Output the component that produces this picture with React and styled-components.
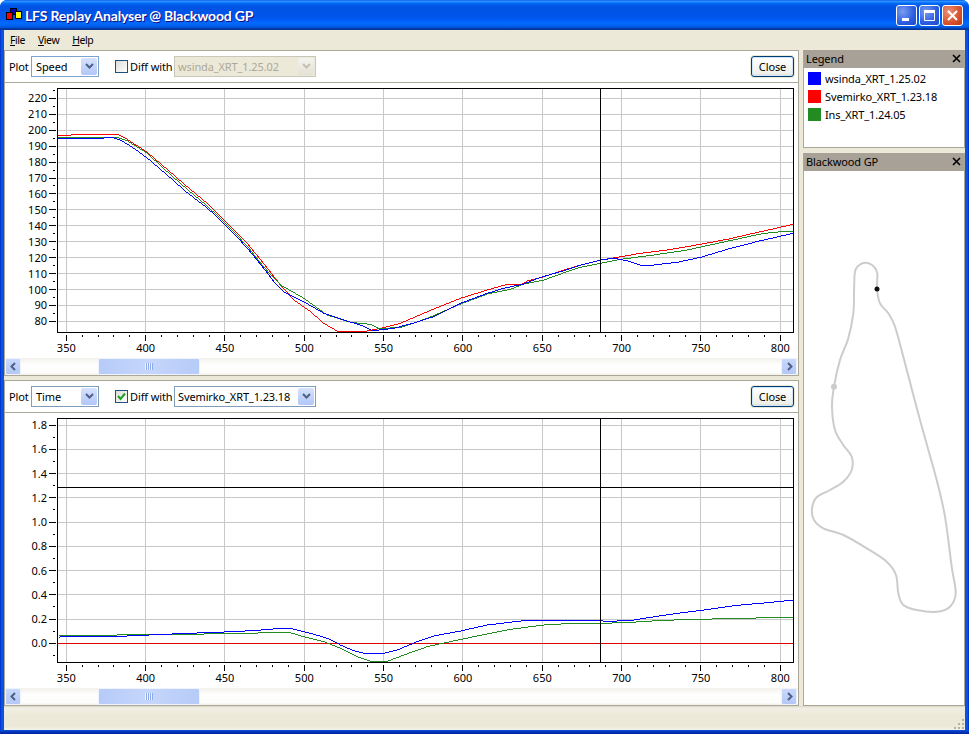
import React from 'react';
import styled, { createGlobalStyle } from 'styled-components';

const UI_FONT = '"Noto Sans", "DejaVu Sans", sans-serif';

const GlobalStyle = createGlobalStyle`
html, body {
  margin: 0;
  padding: 0;
  background: #fff;
}
body {
  font-family: ${UI_FONT};
  font-size: 11px;
  letter-spacing: -0.12px;
  color: #000;
}
`;

// ---- window chrome ----
const Window = styled.div`
width: 969px;
height: 734px;
display: flex;
flex-direction: column;
overflow: hidden;
border-radius: 7px 7px 0 0;
background: #0855dd;
`;
const TitleBar = styled.div`
height: 30px;
flex: none;
display: flex;
align-items: center;
padding: 0 6px;
background: linear-gradient(180deg, #0058ee 0%, #3593ff 4%, #288eff 6%, #127dff 8%, #036ffc 10%, #0262ee 14%, #0057e5 20%, #0054e3 24%, #0055eb 56%, #005bf5 66%, #026afe 76%, #0062ef 86%, #0052d6 92%, #0040ab 94%, #003092 100%);
`;
const TitleText = styled.div`
flex: 1;
margin-left: 3px;
color: #fff;
font-family: Lato, "Open Sans", sans-serif;
font-size: 14px;
font-weight: 700;
letter-spacing: -0.18px;
white-space: nowrap;
text-shadow: 1px 1px 0 #0f1089;
`;
const CaptionButtons = styled.div`
display: flex;
gap: 2px;
`;
const CaptionButton = styled.div`
width: 21px;
height: 21px;
box-sizing: border-box;
border: 1px solid #fff;
border-radius: 3px;
display: flex;
align-items: center;
justify-content: center;
background: ${(p) => (p.$close
    ? 'radial-gradient(circle at 30% 30%, #e8937a, #d8512c 60%, #b83a12)'
    : 'radial-gradient(circle at 30% 30%, #7a9df0, #2b5de0 60%, #1f48c4)')};
`;
const Frame = styled.div`
flex: 1;
min-height: 0;
display: flex;
flex-direction: column;
padding: 0 4px;
background: linear-gradient(90deg, #0019cf 0, #0855dd 1px, #0855dd 968px, #0019cf 969px);
`;
const BottomEdge = styled.div`
height: 4px;
flex: none;
background: linear-gradient(180deg, #0855dd 0, #0842c8 1px, #001ea0 100%);
`;
const Client = styled.div`
flex: 1;
min-height: 0;
display: flex;
flex-direction: column;
background: #ece9d8;
`;
const MenuBar = styled.div`
height: 20px;
flex: none;
display: flex;
align-items: center;
padding-left: 6px;
gap: 13px;
`;
const MenuItem = styled.span`
line-height: 14px;
font-size: 10.5px;
letter-spacing: -0.45px;
`;
const Workspace = styled.div`
height: 656px;
flex: none;
display: flex;
align-items: stretch;
`;
const PlotColumn = styled.div`
width: 795px;
flex: none;
display: flex;
flex-direction: column;
gap: 4px;
`;

// ---- plot panel ----
const PlotPanel = styled.div`
height: 326px;
box-sizing: border-box;
border: 1px solid #aca899;
display: flex;
flex-direction: column;
background: #fff;
`;
const Toolbar = styled.div`
height: 31px;
flex: none;
display: flex;
align-items: center;
padding: 0 4px;
background: #fff;
border-bottom: 1px solid #aca899;
`;
const PlotLabel = styled.span`
width: 22px;
`;
const SelectBox = styled.div`
width: ${(p) => p.$width}px;
height: 21px;
box-sizing: border-box;
flex: none;
display: flex;
align-items: center;
padding: 1px;
padding-left: ${(p) => p.$inset}px;
border: 1px solid ${(p) => (p.$disabled ? '#c9c7ba' : p.$focused ? '#7da2ce' : '#7f9db9')};
background: ${(p) => (p.$disabled ? '#ece9d8' : '#fff')};
color: ${(p) => (p.$disabled ? '#aca899' : '#000')};
`;
const SelectValue = styled.span`
flex: 1;
white-space: nowrap;
`;
const SelectArrow = styled.div`
width: 16px;
height: 17px;
border-radius: 2px;
display: flex;
align-items: center;
justify-content: center;
background: ${(p) => (p.$disabled
    ? 'linear-gradient(180deg, #f4f3ee, #e4e1d4)'
    : 'linear-gradient(180deg, #d6e2fd, #b2c6f8)')};
`;
const CheckBox = styled.div`
width: 13px;
height: 13px;
box-sizing: border-box;
flex: none;
margin-left: 16px;
border: 1px solid #1c5180;
display: flex;
align-items: center;
justify-content: center;
background: linear-gradient(135deg, #dcdcd7, #fff);
`;
const DiffLabel = styled.span`
width: 44px;
margin-left: 2px;
white-space: nowrap;
`;
const CloseButton = styled.div`
width: 43px;
height: 21px;
box-sizing: border-box;
flex: none;
margin-left: auto;
border: 1px solid #003c74;
border-radius: 3px;
display: flex;
align-items: center;
justify-content: center;
background: linear-gradient(180deg, #fff, #f0f0ea 85%, #dcd8cc);
box-shadow: inset 0 0 0 1px #cee7ff, 0 0 0 1px #ece9d8;
`;
const ChartSvg = styled.svg`
display: block;
width: 793px;
height: 275px;
flex: none;
background: #fff;
`;
const AxisText = styled.text`
font-family: ${UI_FONT};
font-size: 11px;
letter-spacing: 0;
fill: #000;
text-anchor: ${(p) => p.$anchor};
`;

// ---- scroll bar ----
const ScrollBar = styled.div`
height: 17px;
flex: none;
display: flex;
align-items: stretch;
background: linear-gradient(180deg, #f3f1ec, #fefefe 40%, #fdfdfb 85%, #f0efe8);
`;
const ScrollArrow = styled.div`
width: 14px;
flex: none;
margin-left: ${(p) => (p.$right ? 'auto' : '0')};
margin-right: ${(p) => (p.$right ? '1px' : '0')};
border: 1px solid #eef3fd;
border-radius: 2px;
display: flex;
align-items: center;
justify-content: center;
background: linear-gradient(180deg, #c9d8fc, #b4c8f6);
`;
const ScrollThumb = styled.div`
width: 100px;
flex: none;
margin-left: 77px;
border: 1px solid #eef3fd;
border-radius: 2px;
display: flex;
align-items: center;
justify-content: center;
background: linear-gradient(90deg, #b6cbf8, #c6d6fb 50%, #b6cbf8);
`;
const ThumbGrip = styled.div`
width: 8px;
height: 7px;
background: repeating-linear-gradient(90deg, #eef4fe 0, #eef4fe 1px, #8faae8 1px, #8faae8 2px);
`;

// ---- docks ----
const DockColumn = styled.div`
width: 162px;
flex: none;
margin-left: 4px;
display: flex;
flex-direction: column;
gap: 5px;
`;
const Dock = styled.div`
height: ${(p) => (p.$height ? `${p.$height}px` : 'auto')};
flex: ${(p) => (p.$height ? 'none' : '1')};
min-height: 0;
box-sizing: border-box;
display: flex;
flex-direction: column;
border: 1px solid #aca899;
border-top: none;
background: #fff;
`;
const DockHeader = styled.div`
height: 18px;
box-sizing: border-box;
flex: none;
display: flex;
align-items: center;
justify-content: space-between;
padding: 0 3px 2px 2px;
background: #a8a197;
`;
const LegendList = styled.div`
display: flex;
flex-direction: column;
gap: 5px;
padding: 4px 4px;
`;
const LegendRow = styled.div`
display: flex;
align-items: center;
gap: 4px;
height: 13px;
`;
const Swatch = styled.div`
width: 13px;
height: 13px;
background: ${(p) => p.$color};
`;
const TrackSvg = styled.svg`
display: block;
width: 160px;
flex: 1;
min-height: 0;
`;

// ---- status bar ----
const StatusBar = styled.div`
flex: 1;
min-height: 0;
position: relative;
background: linear-gradient(180deg, #d8d5c6 0, #f1efe4 2px, #ece9d8 40%, #ece9d8 85%, #f5f3ea 100%);
`;
const SizeGrip = styled.svg`
position: absolute;
right: 0;
bottom: 0;
`;

// ---- plot data, in window pixels ----
const LEFT = 57, RIGHT = 793, TOP = 88, BOTTOM = 332;
const xPos = (v) => 66.3 + (v - 350) * 1.5867;
const X_MAJOR = [350, 400, 450, 500, 550, 600, 650, 700, 750, 800];
const X_MINOR = [];
for (let v = 340; v <= 800; v += 10) if (v % 50 !== 0 && xPos(v) > LEFT) X_MINOR.push(v);

const speedCurves = [
  { color: '#ff0000', pts: [[57,135.3],[70,135],[71,134.3],[116.7,134.3],[126.7,139.3],[146.7,152.3],[166.7,169.3],[186.7,186.7],[206.7,203.3],[225,221],[246.7,243.3],[263,263.3],[280,285],[293.3,300],[310,311.7],[323.3,323.3],[336.7,331],[366.7,331],[380,328.3],[400,323.3],[426.7,311.7],[460,298.3],[486.7,290],[506.7,284.3],[520,285],[526.7,281],[543.3,276.7],[560,271],[580,265],[600,260],[620,256.7],[640,253.3],[666.7,250],[700,244.3],[726.7,239.3],[760,231.7],[793,224.3]] },
  { color: '#228b22', pts: [[57,137.3],[116.7,137.3],[126.7,140.7],[146.7,153.3],[166.7,171.7],[186.7,189.3],[206.7,206],[225,223.3],[246.7,246],[263,266.7],[280,285],[303.3,298.3],[326.7,315],[350,322.3],[370,324.3],[378.3,328.3],[400,327.7],[426.7,318.3],[460,304],[486.7,294],[510,289.3],[523.3,284],[543.3,280],[560,274],[580,267.3],[600,263.3],[620,259.3],[653.3,255],[686.7,250],[720,242.7],[760,234],[773,232.3],[793,231]] },
  { color: '#0000ff', pts: [[57,138.3],[100,138.3],[111.7,137.3],[120,140],[133,148],[146.7,158],[166.7,175],[186.7,192.7],[206.7,208],[225,225],[246.7,248],[263,268],[273.3,281.7],[283.3,291.7],[303.3,301.7],[323.3,313.3],[343.3,320],[360,325],[371.7,330.7],[393.3,328.3],[413,323],[433,316.7],[460,303.3],[486.7,293.3],[503.3,288.3],[523,284],[540,277.3],[560,271.7],[580,265],[600,260],[613.3,258.3],[626.7,260.7],[640,265],[653.3,265],[676.7,262.3],[700,257.3],[726.7,249.3],[760,240.7],[793,233.3]] },
];
// the time plot is drawn in its own panel, so its y values are 330 less than on the window
const timeCurves = [
  { color: '#228b22', pts: [[57.3,635.3],[116.7,635],[163,634],[200,634.3],[213,633.3],[251.7,633.3],[270,632.3],[288.3,632.3],[303.3,636.7],[323.3,641.7],[340,648.3],[356.7,656.7],[370,661.3],[386.7,661.3],[403.3,655],[426.7,646.7],[446.7,642.3],[473.3,636.7],[510,629.3],[543.3,625],[571.7,623.3],[603.3,623.3],[630,622.3],[656.7,620.7],[690,619.3],[733.3,618.7],[778.3,617.3],[793,617.3]] },
  { color: '#0000ff', pts: [[57.3,637.3],[68,636],[126.7,636],[163,634.3],[190,633.3],[213,632.3],[233,631.7],[250,630.7],[270,629.3],[276.7,628.3],[290,628.3],[310,633.3],[326.7,638.3],[340,645],[353.3,650.7],[363.3,653.3],[383.3,653.3],[396.7,650],[416.7,641.7],[433.3,636],[460,631],[486.7,625],[520,621],[543.3,620.3],[601.7,620.7],[605,621.7],[616.7,621],[633.3,620],[650,617.3],[676.7,613.3],[703.3,610],[736.7,605.3],[766.7,602.7],[793,600]] },
].map((c) => ({ ...c, pts: c.pts.map(([x, y]) => [x, y - 330]) }));

const trackPts = [[877,289],[877.3,273.3],[874,266.7],[865.7,262.7],[857.3,266.7],[854.7,273.3],[854,293.3],[853.3,313.3],[848.3,338.3],[840,360],[834,386.7],[832,406.7],[835,430],[843.3,445],[851.7,456.7],[851.7,470],[843.3,481.7],[830,490],[816.7,497.3],[812,508.3],[814,520],[823.3,528.3],[843.3,535],[866.7,548.3],[886.7,561.7],[896,575],[898.3,593.3],[903.3,605],[916.7,610],[936.7,611.7],[950,606.7],[955.7,593.3],[951.7,566.7],[945,516.7],[936.7,480],[920,420],[903.3,356.7],[895,326.7],[888.3,313.3],[880,303.3]];

// closed catmull-rom through the track points
const smoothClosed = (pts) => {
  const n = pts.length;
  let d = `M${pts[0][0]} ${pts[0][1]}`;
  for (let i = 0; i < n; i++) {
    const p0 = pts[(i - 1 + n) % n], p1 = pts[i], p2 = pts[(i + 1) % n], p3 = pts[(i + 2) % n];
    const c1 = [p1[0] + (p2[0] - p0[0]) / 6, p1[1] + (p2[1] - p0[1]) / 6];
    const c2 = [p2[0] - (p3[0] - p1[0]) / 6, p2[1] - (p3[1] - p1[1]) / 6];
    d += `C${c1[0].toFixed(1)} ${c1[1].toFixed(1)} ${c2[0].toFixed(1)} ${c2[1].toFixed(1)} ${p2[0]} ${p2[1]}`;
  }
  return d + 'Z';
};

// one sample per pixel, snapped, so crispEdges gives the thin aliased line of the reference
const samplePath = (pts) => {
  let d = '';
  let seg = 0;
  for (let x = Math.ceil(pts[0][0]); x <= Math.floor(pts[pts.length - 1][0]); x++) {
    while (seg < pts.length - 2 && pts[seg + 1][0] < x) seg++;
    const [x0, y0] = pts[seg];
    const [x1, y1] = pts[seg + 1];
    const y = Math.floor(y0 + ((y1 - y0) * (x - x0)) / (x1 - x0)) + 0.5;
    d += `${d ? 'L' : 'M'}${x + 0.5} ${y}`;
  }
  return d;
};

const px = (v) => Math.floor(v) + 0.5;

const Chart = ({ yTicks, yMinor, curves, level, zeroY }) => (
  <ChartSvg viewBox="5 83 793 275" shapeRendering="crispEdges">
    <g stroke="#c8c8c8" fill="none">
      {X_MAJOR.map((v) => <line key={v} x1={px(xPos(v))} x2={px(xPos(v))} y1={TOP} y2={BOTTOM} />)}
      {yTicks.map((t) => <line key={t.label} x1={LEFT} x2={RIGHT} y1={px(t.y)} y2={px(t.y)} />)}
    </g>
    {zeroY && <line x1={LEFT} x2={RIGHT} y1={px(zeroY)} y2={px(zeroY)} stroke="#e00000" />}
    {curves.map((c) => <path key={c.color} d={samplePath(c.pts)} fill="none" stroke={c.color} />)}
    <line x1="600.5" x2="600.5" y1={TOP} y2={BOTTOM} stroke="#000" />
    {level && <line x1={LEFT} x2={RIGHT} y1={px(level)} y2={px(level)} stroke="#000" />}
    <rect x={LEFT + 0.5} y={TOP + 0.5} width={RIGHT - LEFT} height={BOTTOM - TOP} fill="none" stroke="#000" />
    <g stroke="#000">
      {yTicks.map((t) => <line key={t.label} x1="49" x2="56" y1={px(t.y)} y2={px(t.y)} />)}
      {yMinor.map((y) => <line key={y} x1="53" x2="55" y1={px(y)} y2={px(y)} />)}
      {X_MAJOR.map((v) => <line key={v} x1={px(xPos(v))} x2={px(xPos(v))} y1="335" y2="341" />)}
      {X_MINOR.map((v) => <line key={v} x1={px(xPos(v))} x2={px(xPos(v))} y1="335" y2="337" />)}
    </g>
    <g shapeRendering="auto">
      {yTicks.map((t) => <AxisText key={t.label} $anchor="end" x="47" y={t.y + 4}>{t.label}</AxisText>)}
      {X_MAJOR.map((v) => <AxisText key={v} $anchor="middle" x={xPos(v)} y="352">{v}</AxisText>)}
    </g>
  </ChartSvg>
);

const Chevron = ({ dir = 'down', color = '#4d6185' }) => {
  const pts = {
    down: '1,2 4.5,5.5 8,2',
    left: '6,1 2.5,4.5 6,8',
    right: '3,1 6.5,4.5 3,8',
  }[dir];
  return (
    <svg width="9" height="9" viewBox="0 0 9 9">
      <polyline points={pts} fill="none" stroke={color} strokeWidth="2" />
    </svg>
  );
};

const Select = ({ width, inset, value, disabled, focused }) => (
  <SelectBox $width={width} $inset={inset} $disabled={disabled} $focused={focused}>
    <SelectValue>{value}</SelectValue>
    <SelectArrow $disabled={disabled}>
      <Chevron color={disabled ? '#c4c1b4' : '#4d6185'} />
    </SelectArrow>
  </SelectBox>
);

const Scroller = () => (
  <ScrollBar>
    <ScrollArrow><Chevron dir="left" /></ScrollArrow>
    <ScrollThumb><ThumbGrip /></ScrollThumb>
    <ScrollArrow $right><Chevron dir="right" /></ScrollArrow>
  </ScrollBar>
);

const PlotArea = ({ plot, checked, focused, diff, chart }) => (
  <PlotPanel>
    <Toolbar>
      <PlotLabel>Plot</PlotLabel>
      <Select width={68} inset={4} value={plot} focused={focused} />
      <CheckBox>
        {checked && (
          <svg width="9" height="9" viewBox="0 0 9 9">
            <polyline points="1,4 3.5,7 8,1.5" fill="none" stroke="#21a121" strokeWidth="2" />
          </svg>
        )}
      </CheckBox>
      <DiffLabel>Diff with</DiffLabel>
      <Select width={142} inset={3} value={diff} disabled={!checked} />
      <CloseButton>Close</CloseButton>
    </Toolbar>
    {chart}
    <Scroller />
  </PlotPanel>
);

const speedTicks = Array.from({ length: 15 }, (_, i) => ({ label: String(220 - i * 10), y: 98.4 + i * 15.93 }));
const speedMinor = Array.from({ length: 15 }, (_, i) => 90.4 + i * 15.93);
const timeTicks = Array.from({ length: 10 }, (_, i) => ({ label: (1.8 - i * 0.2).toFixed(1), y: 95 + i * 24.27 }));
const timeMinor = Array.from({ length: 10 }, (_, i) => 107.1 + i * 24.27);

const legend = [
  { name: 'wsinda_XRT_1.25.02', color: '#0000ff' },
  { name: 'Svemirko_XRT_1.23.18', color: '#ff0000' },
  { name: 'Ins_XRT_1.24.05', color: '#228b22' },
];

const DockClose = () => (
  <svg width="9" height="9" viewBox="0 0 9 9">
    <path d="M1 1L8 8M8 1L1 8" stroke="#000" strokeWidth="1.6" fill="none" />
  </svg>
);

const App = () => {
  return (
    <Window>
      <GlobalStyle />
      <TitleBar>
        <svg width="16" height="14" viewBox="0 0 16 14">
          <rect x="4.5" y="0.5" width="6" height="6" fill="#0000c0" stroke="#000" />
          <rect x="0.5" y="4.5" width="6" height="7" fill="#ff0000" stroke="#000" />
          <rect x="9.5" y="3.5" width="6" height="7" fill="#ffff00" stroke="#000" />
        </svg>
        <TitleText>LFS Replay Analyser @ Blackwood GP</TitleText>
        <CaptionButtons>
          <CaptionButton>
            <svg width="13" height="13" viewBox="0 0 13 13"><rect x="2" y="9" width="7" height="3" fill="#fff" /></svg>
          </CaptionButton>
          <CaptionButton>
            <svg width="13" height="13" viewBox="0 0 13 13"><path d="M1.5 3.5h10v8h-10z" fill="none" stroke="#fff" /><rect x="1" y="1" width="11" height="3" fill="#fff" /></svg>
          </CaptionButton>
          <CaptionButton $close>
            <svg width="13" height="13" viewBox="0 0 13 13"><path d="M2 2L11 11M11 2L2 11" stroke="#fff" strokeWidth="2" fill="none" /></svg>
          </CaptionButton>
        </CaptionButtons>
      </TitleBar>
      <Frame>
        <Client>
          <MenuBar>
            <MenuItem><u>F</u>ile</MenuItem>
            <MenuItem><u>V</u>iew</MenuItem>
            <MenuItem><u>H</u>elp</MenuItem>
          </MenuBar>
          <Workspace>
            <PlotColumn>
              <PlotArea
                plot="Speed"
                focused
                diff="wsinda_XRT_1.25.02"
                chart={<Chart yTicks={speedTicks} yMinor={speedMinor} curves={speedCurves} />}
              />
              <PlotArea
                plot="Time"
                checked
                diff="Svemirko_XRT_1.23.18"
                chart={<Chart yTicks={timeTicks} yMinor={timeMinor} curves={timeCurves} level={157} zeroY={313.4} />}
              />
            </PlotColumn>
            <DockColumn>
              <Dock $height={98}>
                <DockHeader>Legend<DockClose /></DockHeader>
                <LegendList>
                  {legend.map((l) => (
                    <LegendRow key={l.name}>
                      <Swatch $color={l.color} />
                      {l.name}
                    </LegendRow>
                  ))}
                </LegendList>
              </Dock>
              <Dock>
                <DockHeader>Blackwood GP<DockClose /></DockHeader>
                <TrackSvg viewBox="804 171 160 534">
                  <path d={smoothClosed(trackPts)} fill="none" stroke="#cccccc" strokeWidth="2" />
                  <circle cx="834" cy="386.7" r="3" fill="#cccccc" />
                  <circle cx="877" cy="289" r="2.5" fill="#111" />
                </TrackSvg>
              </Dock>
            </DockColumn>
          </Workspace>
          <StatusBar>
            <SizeGrip width="12" height="12" viewBox="0 0 12 12" fill="#b5b1a0">
              <rect x="9" y="1" width="2" height="2" />
              <rect x="5" y="5" width="2" height="2" /><rect x="9" y="5" width="2" height="2" />
              <rect x="1" y="9" width="2" height="2" /><rect x="5" y="9" width="2" height="2" />
              <rect x="9" y="9" width="2" height="2" />
            </SizeGrip>
          </StatusBar>
        </Client>
      </Frame>
      <BottomEdge />
    </Window>
  );
};

export default App;
